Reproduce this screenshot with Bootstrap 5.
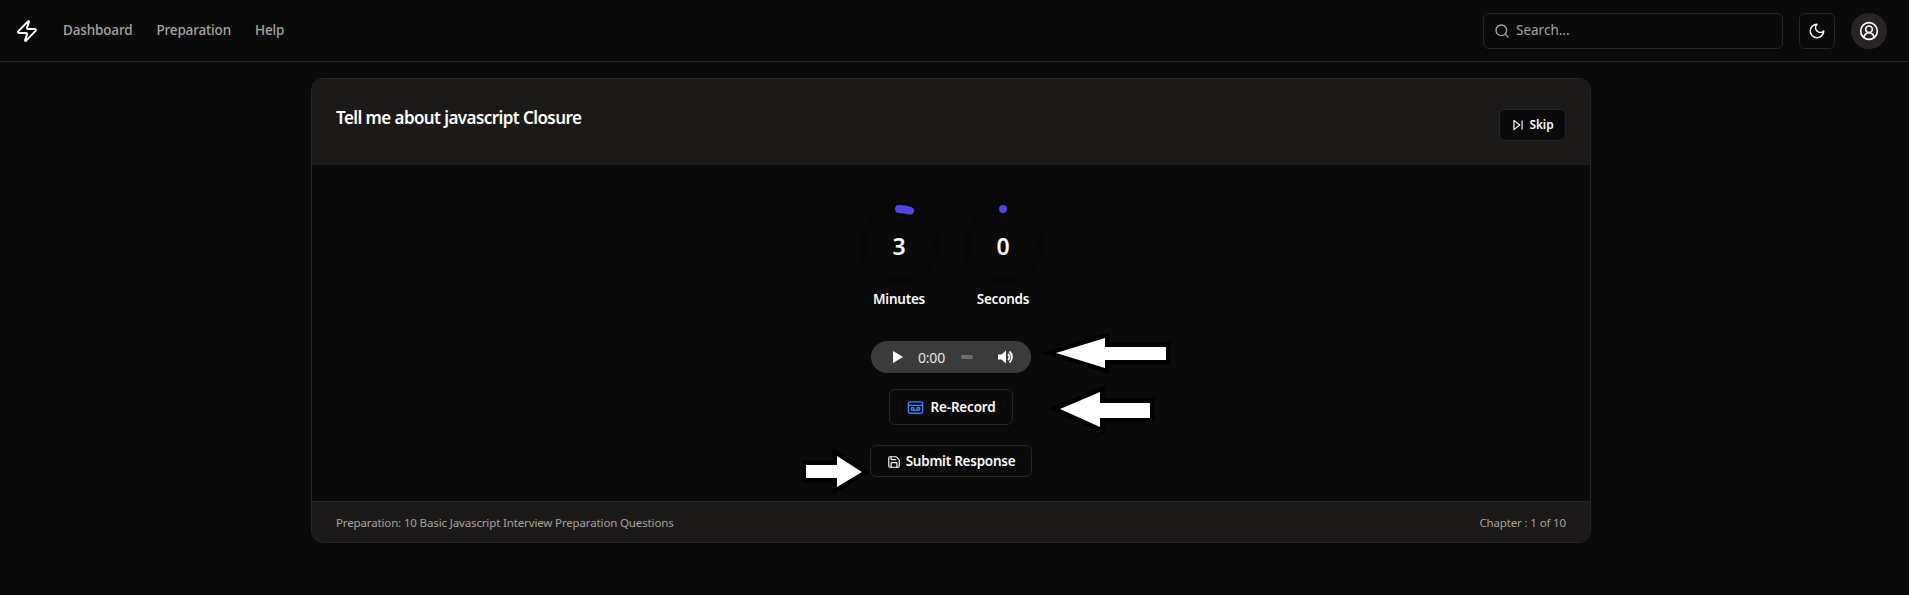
<!DOCTYPE html>
<html lang="en" data-bs-theme="dark">
<head>
  <meta charset="UTF-8" />
  <title>Interview Preparation</title>
  <meta name="viewport" content="width=device-width, initial-scale=1">
  <link href="https://cdn.jsdelivr.net/npm/bootstrap@5.3.0/dist/css/bootstrap.min.css" rel="stylesheet">
  <style>
    body {
      background: #0a0a0a;
      color: #fafaf9;
      font-family: "Noto Sans", "Open Sans", sans-serif;
      height: 595px;
      overflow: hidden;
    }
    svg.lu { fill: none; stroke: currentColor; stroke-width: 2; stroke-linecap: round; stroke-linejoin: round; flex: none; }
    .top-nav { height: 62px; border-bottom: 1px solid #292524; padding: 0 22px 0 15px; }
    .top-nav .brand-mark { color: #fafaf9; margin-right: 24px; }
    .top-nav .nav-item-link { color: #a8a29e; font-size: 13.5px; font-weight: 500; text-decoration: none; letter-spacing: -.15px; margin-right: 24px; }
    .search-box { width: 300px; height: 36px; border: 1px solid #292524; border-radius: 6px; padding-left: 10px; color: #a8a29e; }
    .search-box input { background: transparent; border: 0; outline: 0; color: #fafaf9; font-size: 13.5px; width: 100%; padding: 0; margin-left: 6px; }
    .search-box input::placeholder { color: #a8a29e; opacity: 1; }
    .square-btn { width: 36px; height: 36px; border: 1px solid #292524; border-radius: 6px; color: #fafaf9; background: transparent; padding: 0; }
    .avatar-btn { width: 36px; height: 36px; background: #292524; border-radius: 50%; color: #fafaf9; border: 0; padding: 0; }
    .page-wrap { width: 1280px; margin: 16px auto 0 311px; }
    .prep-card { background: transparent; border: 1px solid #292524; border-radius: 12px; overflow: hidden; }
    .prep-head { background: #1c1a18; border: 0; border-radius: 0; height: 86px; padding: 24px; }
    .prep-title { font-size: 17px; font-weight: 600; line-height: 28px; letter-spacing: -.58px; margin: 0; margin-top: 1px; }
    .dark-btn { background: #0a0a0a; border: 1px solid #292524; border-radius: 6px; color: #fafaf9; font-weight: 600; line-height: 1; padding: 0; flex: none; }
    .skip-btn { width: 67px; height: 32px; font-size: 12px; letter-spacing: -.1px; }
    .prep-body { padding: 40px 0 24px; height: 336px; }
    .timer-label { font-size: 13.5px; font-weight: 600; line-height: 20px; margin-top: 4px; letter-spacing: -.25px; }
    .timer-num { font-size: 23px; font-weight: 600; margin-top: 2px; }
    .timer-ring { width: 80px; height: 80px; }
    .audio-pill { width: 160px; height: 32px; margin-top: 32px; background: #3b3b3b; border-radius: 16px; padding-left: 22px; color: #fff; flex: none; }
    .audio-time { font-size: 14px; color: #e6e6e6; margin-left: 15px; width: 43px; letter-spacing: -.2px; }
    .audio-bar { width: 12px; height: 4px; border-radius: 2px; background: #6e6e6e; margin-right: 25px; }
    .record-btn { width: 124px; height: 36px; margin-top: 16px; font-size: 13.5px; letter-spacing: -.2px; padding-top: 1px; gap: 7px; }
    .submit-btn { width: 162px; height: 32px; margin-top: 20px; font-size: 13.5px; letter-spacing: -.25px; padding-top: 1px; gap: 5px; }
    .prep-foot { background: #1c1a18; border: 0; border-top: 1px solid #292524; border-radius: 0; height: 41px; padding: 1px 24px 0; color: #a8a29e; font-size: 11.5px; letter-spacing: -.14px; }
    .arrow-layer { position: absolute; left: 0; top: 0; pointer-events: none; }
  </style>
</head>
<body>

  <!-- Navbar -->
  <nav class="top-nav d-flex align-items-center">
    <a class="brand-mark d-flex" href="#">
      <svg class="lu" width="24" height="24" viewBox="0 0 24 24"><path d="M4 14a1 1 0 0 1-.78-1.63l9.9-10.2a.5.5 0 0 1 .86.46l-1.92 6.02A1 1 0 0 0 13 10h7a1 1 0 0 1 .78 1.63l-9.9 10.2a.5.5 0 0 1-.86-.46l1.92-6.02A1 1 0 0 0 11 14z"/></svg>
    </a>
    <a class="nav-item-link" href="#">Dashboard</a>
    <a class="nav-item-link" href="#">Preparation</a>
    <a class="nav-item-link" href="#">Help</a>
    <div class="search-box d-flex align-items-center ms-auto">
      <svg class="lu" width="16" height="16" viewBox="0 0 24 24"><circle cx="11" cy="11" r="8"/><path d="m21 21-4.3-4.3"/></svg>
      <input type="text" placeholder="Search...">
    </div>
    <button class="square-btn d-flex align-items-center justify-content-center ms-3" type="button">
      <svg class="lu" width="18" height="18" viewBox="0 0 24 24"><path d="M12 3a6 6 0 0 0 9 9 9 9 0 1 1-9-9Z"/></svg>
    </button>
    <button class="avatar-btn d-flex align-items-center justify-content-center ms-3" type="button">
      <svg class="lu" width="20" height="20" viewBox="0 0 24 24"><path d="M18 20a6 6 0 0 0-12 0"/><circle cx="12" cy="10" r="4"/><circle cx="12" cy="12" r="10"/></svg>
    </button>
  </nav>

  <!-- Question card -->
  <div class="page-wrap">
    <div class="card prep-card">
      <div class="card-header prep-head d-flex justify-content-between">
        <h2 class="prep-title">Tell me about javascript Closure</h2>
        <button class="btn dark-btn skip-btn d-flex align-items-center justify-content-center gap-1 align-self-end" type="button">
          <svg class="lu" width="14" height="14" viewBox="0 0 24 24" stroke-width="1.5"><polygon points="5 4 15 12 5 20 5 4"/><line x1="19" x2="19" y1="5" y2="19"/></svg>
          Skip
        </button>
      </div>

      <div class="card-body prep-body d-flex flex-column align-items-center">
        <div class="d-flex gap-4">
          <div class="d-flex flex-column align-items-center">
            <div class="timer-ring position-relative d-flex align-items-center justify-content-center">
              <svg class="position-absolute top-0 start-0" width="80" height="80" viewBox="0 0 80 80" fill="none">
                <circle cx="40" cy="40" r="36" stroke="#080808" stroke-width="8"/>
                <path d="M40 4A36 36 0 0 1 51 5.7" stroke="#4f46e5" stroke-width="8" stroke-linecap="round"/>
              </svg>
              <span class="timer-num">3</span>
            </div>
            <div class="timer-label">Minutes</div>
          </div>
          <div class="d-flex flex-column align-items-center">
            <div class="timer-ring position-relative d-flex align-items-center justify-content-center">
              <svg class="position-absolute top-0 start-0" width="80" height="80" viewBox="0 0 80 80" fill="none">
                <circle cx="40" cy="40" r="36" stroke="#080808" stroke-width="8"/>
                <circle cx="40" cy="4" r="4" fill="#4f46e5"/>
              </svg>
              <span class="timer-num">0</span>
            </div>
            <div class="timer-label">Seconds</div>
          </div>
        </div>

        <div class="audio-pill d-flex align-items-center">
          <svg width="10" height="12" viewBox="0 0 10 12"><path d="M0 0l10 6-10 6z" fill="#fff"/></svg>
          <span class="audio-time">0:00</span>
          <span class="audio-bar"></span>
          <svg width="16" height="16" viewBox="0 0 16 16"><path d="M0 5.5h3.5L8 1.5v13l-4.500-4H0z" fill="#fff"/><path d="M10 5a4 4 0 0 1 0 6M11.500 2.500a7.500 7.500 0 0 1 0 11" fill="none" stroke="#fff" stroke-width="1.800"/></svg>
        </div>

        <button class="btn dark-btn record-btn d-flex align-items-center justify-content-center" type="button">
          <svg class="lu" width="17" height="17" viewBox="0 0 24 24" style="color:#3b82f6"><rect x="2" y="4" width="20" height="16" rx="2"/><path d="M2 9h20"/><circle cx="8" cy="14" r="2"/><circle cx="16" cy="14" r="2"/><path d="M8 16h8"/></svg>
          Re-Record
        </button>

        <button class="btn dark-btn submit-btn d-flex align-items-center justify-content-center" type="button">
          <svg class="lu" width="14" height="14" viewBox="0 0 24 24"><path d="M15.2 3a2 2 0 0 1 1.400.6l3.800 3.800a2 2 0 0 1 .6 1.400V19a2 2 0 0 1-2 2H5a2 2 0 0 1-2-2V5a2 2 0 0 1 2-2z"/><path d="M17 21v-7a1 1 0 0 0-1-1H8a1 1 0 0 0-1 1v7"/><path d="M7 3v4a1 1 0 0 0 1 1h7"/></svg>
          Submit Response
        </button>
      </div>

      <div class="card-footer prep-foot d-flex justify-content-between align-items-center">
        <span>Preparation: 10 Basic Javascript Interview Preparation Questions</span>
        <span>Chapter : 1 of 10</span>
      </div>
    </div>
  </div>

  <!-- Arrows pasted over the screenshot -->
  <svg class="arrow-layer" width="1909" height="595" viewBox="0 0 1909 595">
    <g fill="#fff" stroke="#000" stroke-width="9" paint-order="stroke" stroke-linejoin="miter" stroke-miterlimit="8">
      <polygon points="1056,353 1105,338 1105,347 1166,347 1166,360 1105,360 1105,368"/>
      <polygon points="1060,409 1100,392 1100,403 1150,403 1150,418 1100,418 1100,427"/>
      <polygon points="806,465 837,465 837,456 862,472 837,487 837,478 806,478"/>
    </g>
  </svg>

  <script src="https://cdn.jsdelivr.net/npm/bootstrap@5.3.0/dist/js/bootstrap.bundle.min.js"></script>
</body>
</html>
